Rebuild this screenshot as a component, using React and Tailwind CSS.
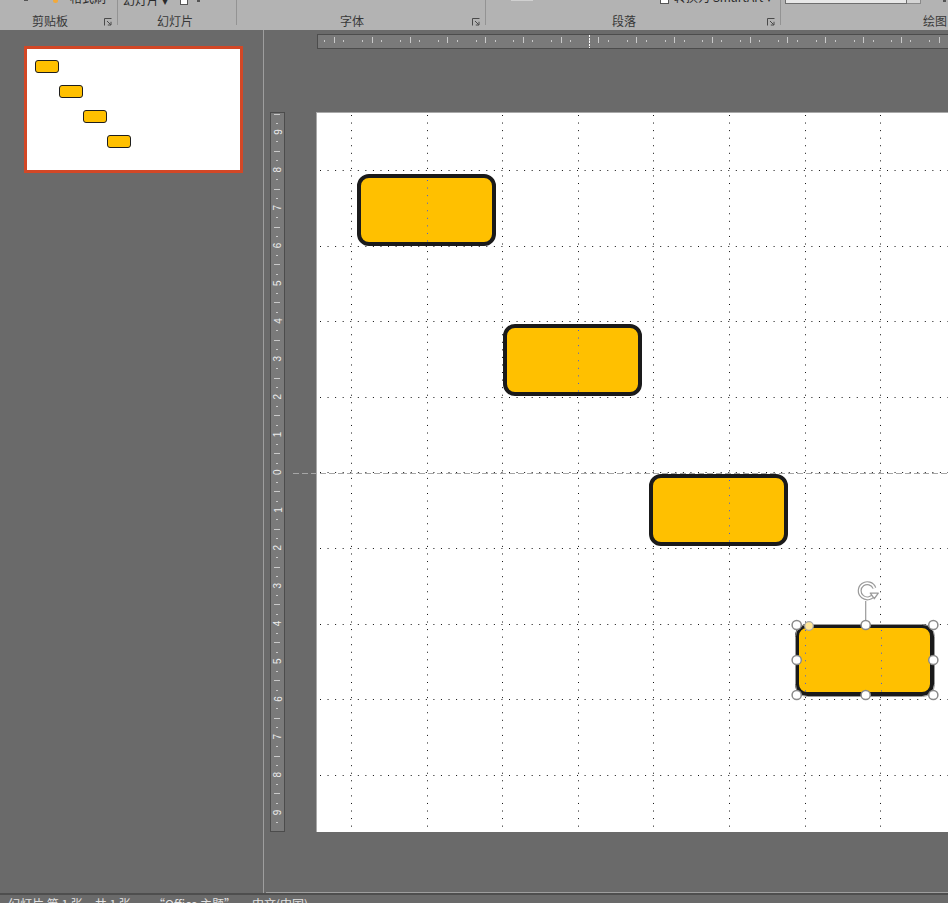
import React from "react";

const CJK = "font-['Noto_Sans_CJK_SC','Liberation_Sans',sans-serif]";

function Launcher() {
  return (
    <svg width="8" height="8" viewBox="0 0 8 8" className="shrink-0">
      <path d="M0.5 7.5V0.5H7.5" fill="none" stroke="#4a4a4a" />
      <path d="M3 3L6.8 6.8M7 3.8V7H3.8" fill="none" stroke="#4a4a4a" />
    </svg>
  );
}

function Group({ className, labelPad, label, launcher, sep = true, children }) {
  return (
    <div className={`flex shrink-0 ${className}`}>
      <div className="flex flex-col flex-1 min-w-0">
        <div className="h-[12px] overflow-hidden flex items-start">{children}</div>
        <div className="h-[17px] flex items-center">
          <span className={`${labelPad} text-[12px] leading-[16px] text-[#383838] whitespace-nowrap`}>{label}</span>
          {launcher && (
            <div className="ml-auto mr-[5px] mt-[2px]">
              <Launcher />
            </div>
          )}
        </div>
      </div>
      {sep && <div className="w-px h-[25px] bg-[#939393]" />}
    </div>
  );
}

function Ribbon() {
  return (
    <div className={`h-[30px] bg-[#b3b3b3] flex shrink-0 overflow-hidden ${CJK}`}>
      <Group className="w-[118px]" labelPad="pl-[32px]" label="剪贴板" launcher>
        <div className="ml-[24px] w-[4px] h-[1px] bg-[#555]" />
        <div className="ml-[25px] w-[5px] h-[3px] rounded-b-full bg-[#f2a93b]" />
        <span className="ml-[12px] -mt-[9px] text-[12px] leading-[14px] text-[#2a2a2a] whitespace-nowrap">格式刷</span>
      </Group>
      <Group className="w-[119px]" labelPad="pl-[39px]" label="幻灯片">
        <span className="ml-[5px] w-[57px] -mt-[7px] text-[12px] leading-[14px] text-[#2a2a2a] whitespace-nowrap">幻灯片 ▾</span>
        <div className="w-[8px] h-[5px] bg-white border-x border-b border-[#555]" />
        <div className="ml-[9px] w-[3px] h-[2px] bg-[#555]" />
      </Group>
      <Group className="w-[249px]" labelPad="pl-[103px]" label="字体" launcher />
      <Group className="w-[295px]" labelPad="pl-[126px]" label="段落" launcher>
        <div className="ml-[25px] w-[22px] h-[1px] bg-[#d0d0d0]" />
        <div className="ml-[127px] w-[9px] h-[4px] bg-white border-x border-b border-[#555]" />
        <span className="ml-[5px] -mt-[10px] text-[12px] leading-[14px] text-[#2a2a2a] whitespace-nowrap">转换为 SmartArt ▾</span>
      </Group>
      <Group className="flex-1" labelPad="pl-[142px]" label="绘图" sep={false}>
        <div className="ml-[4px] w-[122px] h-[4px] bg-[#e8e8e8] border-x border-b border-[#6e6e6e]" />
        <div className="w-[14px] h-[4px] bg-[#d4d4d4] border-r border-b border-[#8a8a8a]" />
        <div className="ml-[22px] w-[3px] h-[2px] bg-[#555]" />
      </Group>
    </div>
  );
}

function Thumbnail() {
  const pos = [
    "left-[8px] top-[11px]",
    "left-[32px] top-[36px]",
    "left-[56px] top-[61px]",
    "left-[80px] top-[86px]",
  ];
  return (
    <div className="w-[219px] h-[127px] border-[3px] border-[#d24726] bg-white relative">
      {pos.map((p) => (
        <div key={p} className={`absolute ${p} w-[24px] h-[13px] rounded-[3px] border border-[#1e1e1e] bg-[#ffc000]`} />
      ))}
    </div>
  );
}

function HRuler() {
  const ticks = [];
  for (let m = -1; m < 18; m++) {
    const c = 34.8 + 37.8 * m;
    [c - 9.45, c + 9.45].forEach((x, i) =>
      ticks.push(<rect key={`s${m}${i}`} x={Math.round(x)} y="5" width="1" height="2" fill="#c9c9c9" />)
    );
    ticks.push(<rect key={`l${m}`} x={Math.round(c + 18.9)} y="2" width="1" height="6" fill="#c9c9c9" />);
  }
  return (
    <div className="ml-[53px] mt-[4px] h-[15px] w-[700px] border border-[#4c4c4c] bg-[#7a7a7a] shrink-0">
      <svg width="698" height="13">
        {ticks}
        <line x1="271.5" y1="0" x2="271.5" y2="13" stroke="#ffffff" strokeDasharray="2 1" />
      </svg>
    </div>
  );
}

function VRuler() {
  const items = [];
  for (let k = 0; k < 19; k++) {
    const y = 19 + 37.8 * k;
    const n = k <= 9 ? 9 - k : k - 9;
    items.push(
      <text
        key={`n${k}`}
        x="7"
        y={y}
        fontSize="10"
        fill="#ececec"
        textAnchor="middle"
        dominantBaseline="central"
        fontFamily="Liberation Sans, sans-serif"
        transform={`rotate(-90 7 ${y})`}
      >
        {n}
      </text>
    );
    [y - 9.45, y + 9.45].forEach((t, i) =>
      items.push(<rect key={`s${k}${i}`} x="5" y={Math.round(t)} width="2" height="1" fill="#c9c9c9" />)
    );
    items.push(<rect key={`l${k}`} x="3" y={Math.round(y + 18.9)} width="6" height="1" fill="#c9c9c9" />);
    if (k === 0) items.push(<rect key="top" x="3" y="1" width="6" height="1" fill="#c9c9c9" />);
  }
  return (
    <div className="ml-[6px] w-[15px] h-[720px] border border-[#4c4c4c] bg-[#7a7a7a] shrink-0">
      <svg width="13" height="718">{items}</svg>
    </div>
  );
}

function Shape({ className, dots }) {
  return (
    <div className={`absolute w-[139px] h-[72px] rounded-[12px] border-4 border-[#1a1a1a] bg-[#ffc000] ${className}`}>
      <svg className="absolute inset-0" width="131" height="64">
        {dots.map((x) => (
          <line key={x} x1={x + 0.5} y1="2" x2={x + 0.5} y2="64" stroke="#3a5ae8" strokeDasharray="1 6.56" />
        ))}
      </svg>
    </div>
  );
}

function Slide() {
  const vx = Array.from({ length: 9 }, (_, i) => Math.round(35 + 75.6 * i) + 0.5);
  const hy = Array.from({ length: 9 }, (_, j) => Math.round(58 + 75.6 * j) + 0.5);
  const handles = [
    [480.7, 513],
    [549.7, 513],
    [617.3, 513],
    [480.7, 548],
    [617.3, 548],
    [480.7, 583],
    [549.7, 583],
    [617.3, 583],
  ];
  return (
    <div className="ml-[31px] w-[700px] h-[720px] bg-white relative shrink-0 shadow-[inset_1px_1px_0_#a9a9a9]">
      <svg className="absolute inset-0" width="700" height="720">
        {vx.map((x) => (
          <line key={`v${x}`} x1={x} y1="3" x2={x} y2="720" stroke="#111" strokeDasharray="1 6.56" />
        ))}
        {hy.map((y) => (
          <line key={`h${y}`} x1="4" y1={y} x2="700" y2={y} stroke="#111" strokeDasharray="1 6.56" />
        ))}
      </svg>
      <Shape className="left-[41px] top-[62px]" dots={[66]} />
      <Shape className="left-[187px] top-[212px]" dots={[71]} />
      <Shape className="left-[333px] top-[362px]" dots={[76]} />
      <Shape className="left-[479px] top-[512px]" dots={[6, 82]} />
      <svg className="absolute inset-0 overflow-visible" width="700" height="720">
        <rect x="479.5" y="512.5" width="139" height="72" rx="12" fill="none" stroke="#9a9a9a" strokeWidth="1" />
        <line x1="549.7" y1="489" x2="549.7" y2="509" stroke="#9a9a9a" strokeWidth="1.2" />
        <g transform="translate(551.3 478.7)">
          <path d="M7 3A7.6 7.6 0 1 1 7.1 -2.6" fill="none" stroke="#9a9a9a" strokeWidth="4" />
          <path d="M7 3A7.6 7.6 0 1 1 7.1 -2.6" fill="none" stroke="#ffffff" strokeWidth="1.6" />
          <path d="M3 2.4L11 2.4L7 8Z" fill="#ffffff" stroke="#9a9a9a" strokeWidth="1.3" strokeLinejoin="round" />
        </g>
        {handles.map(([x, y]) => (
          <circle key={`${x}-${y}`} cx={x} cy={y} r="4.6" fill="#ffffff" stroke="#8a8a8a" strokeWidth="1.5" />
        ))}
        <circle cx="493" cy="514" r="4.3" fill="#ffe699" stroke="#a8a8a8" strokeWidth="1.2" />
      </svg>
    </div>
  );
}

export default function App() {
  return (
    <div className={`w-[948px] h-[903px] bg-[#6a6a6a] flex flex-col overflow-hidden ${CJK}`}>
      <Ribbon />
      <div className="flex flex-1 min-h-0">
        <div className="w-[264px] shrink-0 border-r border-[#9e9e9e] pt-[16px] pl-[24px]">
          <Thumbnail />
        </div>
        <div className="flex-1 flex flex-col overflow-hidden relative">
          <HRuler />
          <div className="flex mt-[63px]">
            <VRuler />
            <Slide />
          </div>
          <svg className="absolute left-[29px] top-[443px]" width="700" height="1">
            <line x1="0" y1="0.5" x2="700" y2="0.5" stroke="#a6a6a6" strokeDasharray="6 3" />
          </svg>
          <div className="mt-auto ml-[2px] h-px bg-[#9e9e9e] shrink-0" />
        </div>
      </div>
      <div className="h-[10px] border-t-2 border-[#4e4e4e] bg-[#6a6a6a] shrink-0 overflow-hidden flex pt-[2px] text-[12px] leading-[14px] text-[#e2e2e2] whitespace-nowrap">
        <span className="ml-[8px] w-[145px]">幻灯片 第 1 张，共 1 张</span>
        <span className="w-[99px]">“Office 主题”</span>
        <span>中文(中国)</span>
      </div>
    </div>
  );
}
